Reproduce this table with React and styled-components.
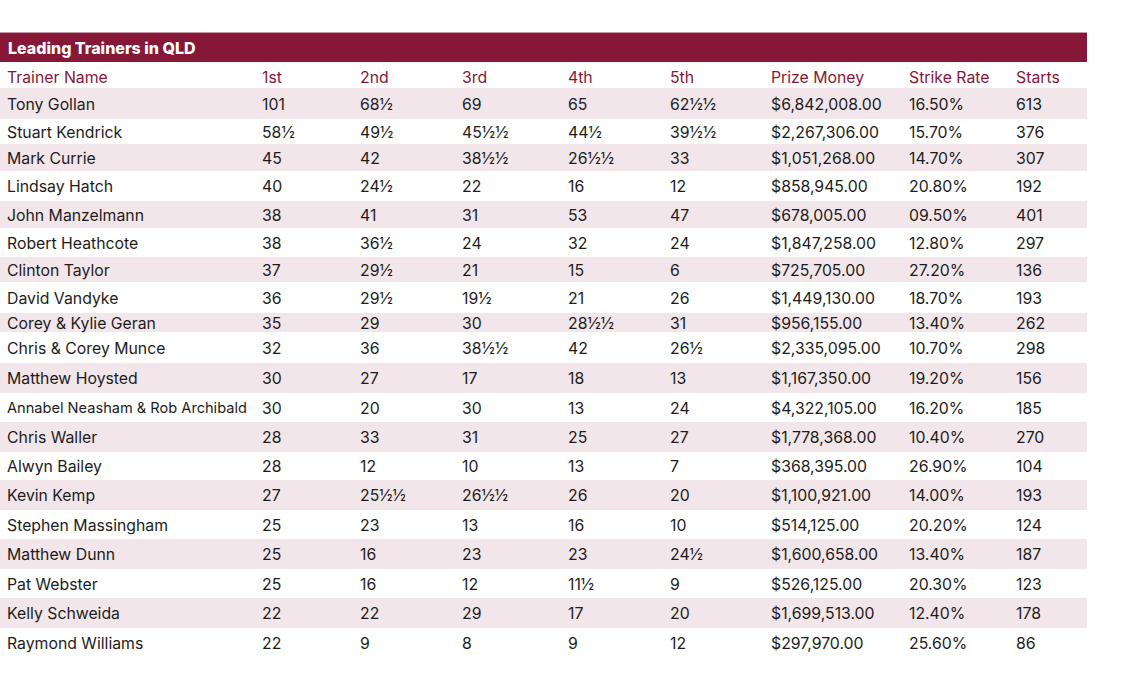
import React from 'react';
import styled, { createGlobalStyle } from 'styled-components';

const GlobalStyle = createGlobalStyle`
    body {
        margin: 0;
        background: #fff;
        font-family: 'Inter', 'Liberation Sans', sans-serif;
    }
`

const Page = styled.div`
    padding-top: 32px;
    width: 1087px;
`

const TitleBar = styled.div`
    height: 30px;
    border-top: 1px solid #c79aa8;
    background: #861737;
    color: #fff;
    font-weight: 800;
    font-size: 16px;
    display: flex;
    align-items: center;
    padding-left: 8px;
    padding-top: 1px;
    box-sizing: border-box;
`

const Row = styled.div`
    display: grid;
    grid-template-columns: 255px 98px 102px 106px 102px 101px 138px 107px 78px;
    align-items: center;
    height: ${props => props.h}px;
    padding-top: ${props => props.head ? '4px' : '1px'};
    box-sizing: border-box;
    background: ${props => props.shaded ? '#f2e6ea' : '#fff'};
    color: ${props => props.head ? '#861737' : '#1c1c1c'};
    font-size: 15.8px;
`

const Cell = styled.div`
    padding-left: 7px;
    white-space: nowrap;
    font-size: ${props => props.small ? '14.6px' : 'inherit'};
`

const columns = ['Trainer Name', '1st', '2nd', '3rd', '4th', '5th', 'Prize Money', 'Strike Rate', 'Starts'];

const trainers = [
    ['Tony Gollan', '101', '68½', '69', '65', '62½½', '$6,842,008.00', '16.50%', '613', 31],
    ['Stuart Kendrick', '58½', '49½', '45½½', '44½', '39½½', '$2,267,306.00', '15.70%', '376', 25],
    ['Mark Currie', '45', '42', '38½½', '26½½', '33', '$1,051,268.00', '14.70%', '307', 27],
    ['Lindsay Hatch', '40', '24½', '22', '16', '12', '$858,945.00', '20.80%', '192', 30],
    ['John Manzelmann', '38', '41', '31', '53', '47', '$678,005.00', '09.50%', '401', 27],
    ['Robert Heathcote', '38', '36½', '24', '32', '24', '$1,847,258.00', '12.80%', '297', 29],
    ['Clinton Taylor', '37', '29½', '21', '15', '6', '$725,705.00', '27.20%', '136', 25],
    ['David Vandyke', '36', '29½', '19½', '21', '26', '$1,449,130.00', '18.70%', '193', 31],
    ['Corey & Kylie Geran', '35', '29', '30', '28½½', '31', '$956,155.00', '13.40%', '262', 19],
    ['Chris & Corey Munce', '32', '36', '38½½', '42', '26½', '$2,335,095.00', '10.70%', '298', 31],
    ['Matthew Hoysted', '30', '27', '17', '18', '13', '$1,167,350.00', '19.20%', '156', 30],
    ['Annabel Neasham & Rob Archibald', '30', '20', '30', '13', '24', '$4,322,105.00', '16.20%', '185', 29],
    ['Chris Waller', '28', '33', '31', '25', '27', '$1,778,368.00', '10.40%', '270', 30],
    ['Alwyn Bailey', '28', '12', '10', '13', '7', '$368,395.00', '26.90%', '104', 28],
    ['Kevin Kemp', '27', '25½½', '26½½', '26', '20', '$1,100,921.00', '14.00%', '193', 30],
    ['Stephen Massingham', '25', '23', '13', '16', '10', '$514,125.00', '20.20%', '124', 29],
    ['Matthew Dunn', '25', '16', '23', '23', '24½', '$1,600,658.00', '13.40%', '187', 30],
    ['Pat Webster', '25', '16', '12', '11½', '9', '$526,125.00', '20.30%', '123', 29],
    ['Kelly Schweida', '22', '22', '29', '17', '20', '$1,699,513.00', '12.40%', '178', 30],
    ['Raymond Williams', '22', '9', '8', '9', '12', '$297,970.00', '25.60%', '86', 29],
];

export default function App() {
    return (
        <Page>
            <GlobalStyle />
            <TitleBar>Leading Trainers in QLD</TitleBar>
            <Row h={26} head>
                {columns.map(c => <Cell key={c}>{c}</Cell>)}
            </Row>
            {trainers.map((t, i) => (
                <Row key={t[0]} h={t[9]} shaded={i % 2 === 0}>
                    {t.slice(0, 9).map((v, j) => (
                        <Cell key={j} small={j === 0 && v.length > 25}>{v}</Cell>
                    ))}
                </Row>
            ))}
        </Page>
    );
}
